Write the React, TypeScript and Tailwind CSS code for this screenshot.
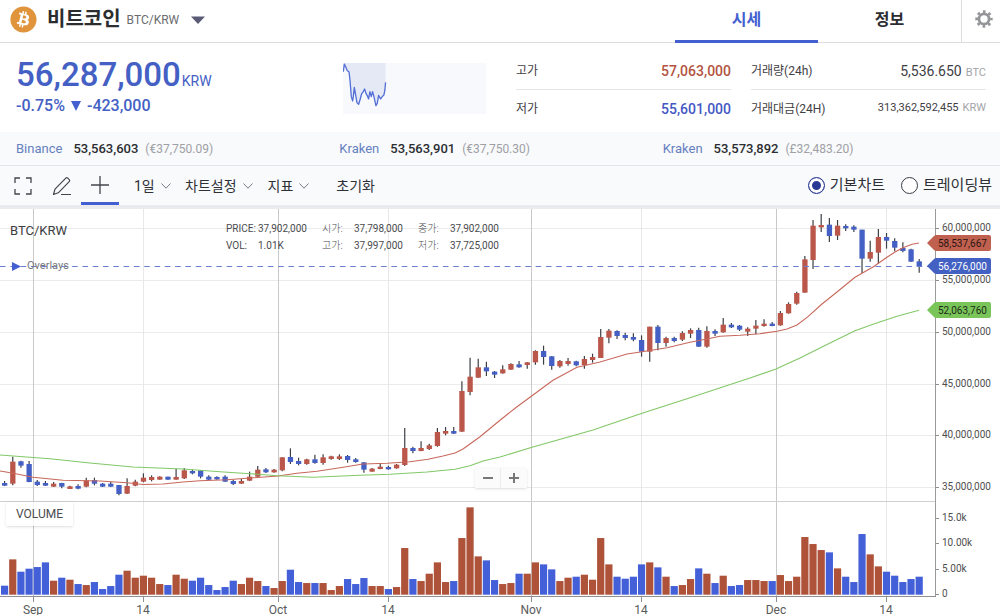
import { useState } from "react";
import { FaBitcoin } from "react-icons/fa";

type Candle = [up: 0 | 1, high: number, top: number, bottom: number, low: number, volume: number];

// Prices run downwards in thirds of a unit from the top of each block.
const blocks: { top: number; candles: Candle[] }[] = [
  {
    top: 440,
    candles: [
      [0, 123, 129, 137, 138, 27],
      [1, 50, 65, 131, 136, 106],
      [0, 62, 64, 77, 83, 69],
      [0, 63, 72, 126, 127, 78],
      [0, 120, 125, 135, 138, 83],
      [0, 123, 129, 137, 138, 97],
      [1, 126, 131, 140, 141, 42],
      [0, 128, 129, 140, 145, 51],
      [1, 137, 139, 147, 147, 45],
      [0, 133, 138, 146, 148, 32],
      [1, 113, 121, 140, 142, 29],
      [0, 113, 120, 131, 136, 38],
      [0, 129, 131, 140, 141, 17],
      [0, 126, 131, 140, 141, 26],
      [0, 135, 135, 162, 166, 60],
      [1, 115, 138, 161, 162, 72],
      [1, 119, 125, 137, 139, 51],
      [1, 100, 113, 125, 127, 57],
      [1, 106, 111, 120, 124, 51],
      [1, 109, 110, 119, 119, 32],
      [0, 110, 110, 119, 120, 29],
      [1, 86, 111, 119, 119, 60],
      [1, 84, 91, 115, 117, 48],
      [0, 89, 93, 100, 103, 42],
      [0, 91, 91, 110, 115, 51],
      [0, 106, 110, 119, 120, 29],
      [0, 109, 111, 118, 119, 14],
      [0, 106, 110, 125, 126, 23],
      [0, 119, 123, 132, 135, 42],
      [1, 117, 123, 131, 132, 32],
      [1, 95, 110, 122, 123, 51],
    ],
  },
  {
    top: 400,
    candles: [
      [1, 198, 209, 230, 231, 41],
      [0, 204, 208, 217, 219, 26],
      [1, 207, 209, 217, 218, 20],
      [1, 171, 172, 211, 214, 41],
      [0, 145, 171, 186, 192, 75],
      [0, 173, 183, 192, 196, 38],
      [1, 176, 178, 192, 194, 35],
      [0, 164, 178, 189, 191, 35],
      [1, 163, 172, 189, 194, 35],
      [1, 167, 169, 177, 179, 14],
      [1, 163, 169, 177, 180, 26],
      [0, 165, 168, 180, 188, 47],
      [0, 174, 178, 186, 188, 32],
      [0, 186, 187, 209, 218, 50],
      [1, 204, 206, 215, 215, 26],
      [1, 191, 200, 207, 208, 26],
      [0, 197, 201, 208, 209, 17],
      [1, 192, 194, 205, 206, 23],
      [1, 84, 144, 195, 198, 140],
      [0, 140, 144, 153, 160, 47],
      [1, 124, 144, 153, 154, 41],
      [1, 131, 136, 147, 150, 63],
      [1, 84, 96, 138, 140, 97],
      [1, 81, 93, 101, 106, 38],
      [0, 81, 93, 101, 102, 41],
    ],
  },
  {
    top: 335,
    candles: [
      [1, 139, 168, 290, 291, 170],
      [1, 68, 125, 171, 181, 262],
      [1, 71, 97, 128, 129, 115],
      [0, 80, 97, 109, 123, 103],
      [0, 108, 110, 119, 129, 44],
    ],
  },
  {
    top: 300,
    candles: [
      [1, 196, 208, 220, 221, 32],
      [1, 190, 192, 209, 210, 35],
      [0, 183, 193, 202, 203, 63],
      [1, 186, 187, 195, 206, 63],
      [1, 151, 153, 187, 194, 97],
      [0, 137, 153, 171, 194, 91],
      [0, 168, 169, 198, 209, 76],
      [1, 180, 183, 199, 203, 41],
      [1, 174, 183, 192, 197, 51],
      [0, 182, 184, 196, 199, 54],
      [1, 168, 177, 195, 206, 60],
      [1, 161, 171, 180, 188, 45],
      [1, 87, 111, 174, 174, 170],
      [1, 87, 92, 113, 130, 91],
      [0, 91, 93, 108, 117, 54],
      [0, 98, 105, 114, 121, 48],
      [0, 100, 111, 119, 124, 54],
      [0, 106, 120, 155, 170, 91],
      [1, 80, 80, 155, 185, 97],
      [0, 75, 80, 129, 151, 82],
      [1, 110, 114, 129, 140, 54],
      [0, 110, 114, 123, 127, 26],
      [1, 94, 99, 119, 123, 29],
      [1, 85, 90, 101, 114, 47],
      [0, 83, 90, 140, 141, 79],
      [1, 79, 93, 140, 143, 63],
      [0, 88, 93, 101, 108, 35],
      [1, 54, 74, 97, 98, 57],
      [0, 69, 74, 82, 84, 26],
      [0, 75, 77, 89, 93, 29],
    ],
  },
  {
    top: 205,
    candles: [
      [1, 367, 371, 380, 393, 44],
      [1, 345, 362, 371, 388, 44],
      [1, 343, 356, 363, 365, 41],
      [0, 351, 356, 363, 364, 41],
      [1, 318, 324, 361, 362, 59],
      [1, 292, 297, 325, 326, 41],
      [1, 260, 264, 296, 299, 54],
      [1, 153, 163, 263, 263, 173],
      [1, 45, 62, 165, 192, 152],
      [1, 27, 60, 67, 81, 134],
      [0, 39, 59, 93, 111, 127],
      [1, 45, 62, 92, 105, 79],
      [0, 58, 63, 70, 78, 54],
      [0, 61, 65, 74, 81, 38],
      [0, 74, 74, 161, 204, 182],
      [1, 107, 141, 161, 170, 121],
      [1, 72, 96, 143, 176, 85],
      [0, 84, 96, 107, 131, 69],
      [0, 100, 108, 128, 139, 57],
      [0, 112, 129, 138, 142, 38],
      [0, 131, 133, 170, 171, 47],
      [0, 162, 169, 184, 203, 54],
    ],
  },
];

const candles = blocks.flatMap(({ top, candles }) =>
  candles.map(([up, high, open, close, low, volume]) => ({
    up: up === 1,
    high: top + high / 3,
    top: top + open / 3,
    bottom: top + close / 3,
    low: top + low / 3,
    volume: volume / 3,
  }))
);

const maShort =
  "0,471 12,473 33,477.3 63,480.3 100,481 127,482.7 143,484.5 163,484 183,482 200,480.7 227,479.7 250,478 278,476 297,473.3 317,471.3 340,467.7 363,464 387,463.3 410,461.7 428,459.3 443,456 455,453 463,449 480,436.7 500,420.3 516,407.5 532,395.7 553,380.3 577,367.3 600,362 627,354 642,351.7 667,347.7 690,342.3 703,339.7 720,336.3 740,335.3 760,333.7 777,331.3 787,329 797,325 808,316.7 822,304 837,292 855,277.3 873,267 887,257.3 895,252 903,247.7 912,244.3 919,243";
const maLong =
  "0,455 50,458.7 90,463 133,467 183,469 220,471.7 250,473.7 278,475.7 313,477.3 360,475.3 390,474.3 427,472 455,469.3 470,465.7 483,461 500,457 532,447.3 593,430 642,413.3 687,398.7 750,378 776,369 800,358 826,345 855,330.7 873,324.3 897,316.3 919,310.3";

const priceTicks = [
  { y: 228, label: "60,000,000" },
  { y: 280, label: "55,000,000" },
  { y: 332, label: "50,000,000" },
  { y: 384, label: "45,000,000" },
  { y: 435, label: "40,000,000" },
  { y: 487, label: "35,000,000" },
];

const volumeTicks = [
  { y: 518, label: "15.0k" },
  { y: 543, label: "10.00k" },
  { y: 569, label: "5.00k" },
  { y: 594, label: "0" },
];

const dateTicks = [
  { x: 33, label: "Sep", month: true },
  { x: 143, label: "14", month: false },
  { x: 278, label: "Oct", month: true },
  { x: 388, label: "14", month: false },
  { x: 531, label: "Nov", month: true },
  { x: 641, label: "14", month: false },
  { x: 776, label: "Dec", month: true },
  { x: 886, label: "14", month: false },
];

const tags = [
  { y: 243, label: "58,537,667", fill: "#c0604f", color: "#2b1512" },
  { y: 266, label: "56,276,000", fill: "#4361c2", color: "#ffffff" },
  { y: 310, label: "52,063,760", fill: "#79c55a", color: "#1d2b17" },
];

const exchanges = [
  { name: "Binance", price: "53,563,603", foreign: "(€37,750.09)" },
  { name: "Kraken", price: "53,563,901", foreign: "(€37,750.30)" },
  { name: "Kraken", price: "53,573,892", foreign: "(£32,483.20)" },
];

const legend = [
  ["PRICE:", "37,902,000", "시가:", "37,798,000", "종가:", "37,902,000"],
  ["VOL:", "1.01K", "고가:", "37,997,000", "저가:", "37,725,000"],
];

const sparkline =
  "1,26 4,3 8,11 13,23 18,26 21,51 25,101 29,114 31,101 34,73 38,96 42,119 47,124 51,111 56,93 61,86 65,78 69,91 73,98 77,108 81,86 85,101 89,86 93,101 99,128 103,121 107,97 113,108 118,101 123,96 126,81 128,58";

function Chevron() {
  return (
    <svg className="h-2 w-3" viewBox="0 0 12 8" fill="none" stroke="#777c85">
      <path d="M1.5 1.5 6 6.2l4.5-4.7" />
    </svg>
  );
}

function Header() {
  return (
    <header className="flex h-[43px] items-stretch border-b border-[#dcdde0] bg-white">
      <div className="flex flex-1 items-center pb-1 pl-[10px]">
        <FaBitcoin className="size-[27px] text-[#e0943c]" />
        <h1 className="ml-[10px] text-[20px] font-bold text-[#2c2d31]">비트코인</h1>
        <button className="ml-[6px] flex items-center gap-3 pt-[2px] text-xs text-[#6b6c70]" aria-haspopup="listbox">
          BTC/KRW
          <svg className="h-2 w-[14px]" viewBox="0 0 14 8" fill="#5c5b76">
            <path d="M0 .5h14L7 8z" />
          </svg>
        </button>
      </div>
      <nav className="-mb-px flex text-base font-bold">
        <a href="#price" className="flex w-[143px] items-center justify-center border-b-[3px] border-[#4460d0] text-[#4460d0]">
          시세
        </a>
        <a href="#info" className="flex w-[143px] items-center justify-center border-b-[3px] border-transparent text-[#2c2d31]">
          정보
        </a>
      </nav>
      <button aria-label="설정" className="flex w-[39px] items-center justify-center border-l border-[#dcdde0] pb-1 pl-[6px]">
        <svg className="size-[18px]" viewBox="0 0 18 18" fill="none" stroke="#949599">
          <circle cx="9" cy="9" r="5.1" strokeWidth="2.8" />
          <circle cx="9" cy="9" r="7.4" strokeWidth="2.6" strokeDasharray="2.7 3.11" strokeDashoffset="1.35" />
        </svg>
      </button>
    </header>
  );
}

function Summary() {
  return (
    <section className="flex bg-white pb-[5px] pl-4 pr-[14px] text-xs text-[#3f4044]">
      <div className="flex-1 pt-[15px] text-[#4460c4]">
        <div className="flex items-baseline gap-px">
          <strong className="text-[33px] font-medium leading-[34px]">56,287,000</strong>
          <span className="text-sm">KRW</span>
        </div>
        <div className="flex items-center text-base leading-7 font-medium">
          -0.75%
          <svg className="mx-[6px] h-[10px] w-[10px]" viewBox="0 0 10 10" fill="#4460d0">
            <path d="M0 0h10L5 10z" />
          </svg>
          -423,000
        </div>
      </div>
      <svg className="mt-5 h-[51px] w-[143px] bg-[#f8f9fc]" viewBox="0 0 430 153" fill="none">
        <polygon points={`1,0 ${sparkline} 128,0`} fill="#e5e9f6" />
        <polyline points={sparkline} stroke="#5470d6" strokeWidth="4" strokeLinejoin="round" />
      </svg>
      <dl className="ml-[30px] w-[215px] pt-[9px]">
        <div className="flex h-[38px] items-center justify-between border-b border-[#e4e5e8]">
          <dt>고가</dt>
          <dd className="text-sm font-medium text-[#b3543f]">57,063,000</dd>
        </div>
        <div className="flex h-[37px] items-center justify-between">
          <dt>저가</dt>
          <dd className="text-sm font-medium text-[#4458c4]">55,601,000</dd>
        </div>
      </dl>
      <dl className="ml-5 w-[235px] pt-[9px]">
        <div className="flex h-[38px] items-center justify-between border-b border-[#e4e5e8]">
          <dt>거래량(24h)</dt>
          <dd className="flex items-baseline gap-1 text-sm">
            5,536.650 <span className="text-[11px] text-[#a3a4a8]">BTC</span>
          </dd>
        </div>
        <div className="flex h-[37px] items-center justify-between">
          <dt>거래대금(24H)</dt>
          <dd className="flex items-baseline gap-1 text-[11px]">
            313,362,592,455 <span className="text-[#a3a4a8]">KRW</span>
          </dd>
        </div>
      </dl>
    </section>
  );
}

function Toolbar() {
  const [view, setView] = useState("basic");
  const views = [
    { id: "basic", label: "기본차트" },
    { id: "trading", label: "트레이딩뷰" },
  ];

  return (
    <div className="flex h-[43px] items-stretch border-b-4 border-[#e9ebef] bg-[#f8fafc] pr-2 text-sm text-[#2f3036]">
      <button aria-label="전체화면" className="flex w-[43px] items-center justify-center pl-[2px]">
        <svg className="size-[18px]" viewBox="0 0 18 18" fill="none" stroke="#44464c" strokeWidth="1.3">
          <path d="M1 6V1h5M12 1h5v5M17 12v5h-5M6 17H1v-5" />
        </svg>
      </button>
      <button aria-label="그리기" className="flex w-[38px] items-center justify-center">
        <svg className="size-5" viewBox="0 0 20 20" fill="none" stroke="#44464c" strokeWidth="1.2" strokeLinejoin="round">
          <path d="M1.500 18.500 3 13.200 13.800 2.200q1-1 2 0l1.400 1.400q1 1 0 2L6.300 16.800zM9 18.500h10" />
        </svg>
      </button>
      <button aria-label="십자선" className="flex w-[38px] items-center justify-center border-b-[3px] border-[#4460d0]">
        <svg className="mt-[2px] size-[18px]" viewBox="0 0 18 18" stroke="#44464c" strokeWidth="1.3">
          <path d="M9 0v18M0 9h18" />
        </svg>
      </button>
      <label className="ml-[15px] flex items-center gap-1">
        <select aria-label="주기" className="w-[22px] appearance-none bg-transparent outline-none">
          <option>1일</option>
        </select>
        <Chevron />
      </label>
      <button className="ml-[13px] flex items-center gap-[5px]" aria-haspopup="menu">
        차트설정 <Chevron />
      </button>
      <button className="ml-[14px] flex items-center gap-[5px]" aria-haspopup="menu">
        지표 <Chevron />
      </button>
      <button className="ml-[26px]">초기화</button>
      <fieldset className="ml-auto flex items-center gap-4 text-[15px]">
        {views.map((item) => (
          <label key={item.id} className="flex items-center gap-[5px]">
            <input
              type="radio"
              name="view"
              checked={view === item.id}
              onChange={() => setView(item.id)}
              className="size-[17px] appearance-none rounded-full border border-[#3a3b46] bg-white checked:border-[#34429a] checked:bg-[#2a3a95] checked:shadow-[inset_0_0_0_3px_white]"
            />
            {item.label}
          </label>
        ))}
      </fieldset>
    </div>
  );
}

function Chart() {
  return (
    <section className="relative bg-white">
      <svg className="block w-full" viewBox="0 209 1000 406" fill="none">
        {/* grid */}
        {priceTicks.map(({ y, label }) => (
          <path key={label} d={`M0 ${y + 0.5}H935`} stroke="#ebebeb" />
        ))}
        {dateTicks.map(({ x, month }) => (
          <path key={x} d={`M${x + 0.5} 209V596`} stroke={month ? "#c9c9c9" : "#e8e8e8"} />
        ))}
        <path d="M0 501.5H935" stroke="#cfcfcf" />

        {/* volume */}
        {candles.map((c, i) => (
          <rect key={i} x={1 + i * 8.166} y={594.7 - c.volume} width="7.2" height={c.volume} fill={c.up ? "#ae5239" : "#4460d8"} />
        ))}

        {/* price */}
        {candles.map((c, i) => (
          <g key={i}>
            <path d={`M${4.6 + i * 8.166} ${c.high}V${c.low}`} stroke="#3b3f45" strokeWidth="1.2" />
            <rect x={2 + i * 8.166} y={c.top} width="5.3" height={c.bottom - c.top} fill={c.up ? "#bb574a" : "#4460c4"} />
          </g>
        ))}
        <polyline points={maShort} stroke="#c8685c" strokeWidth="1.1" />
        <polyline points={maLong} stroke="#82c868" strokeWidth="1.1" />
        <path d="M0 266.5H935" stroke="#6b80cc" strokeDasharray="5.6 4.7" />

        {/* axes */}
        <path d="M935.5 209V596" stroke="#9a9a9a" />
        <path d="M0 596.5H936" stroke="#8f8f8f" />
        {[...priceTicks, ...volumeTicks].map(({ y, label }) => (
          <g key={label}>
            <path d={`M936 ${y + 0.5}h3`} stroke="#8f8f8f" />
            <text x="942" y={y + 3} fontSize="10" fill="#4f4f4f">
              {label}
            </text>
          </g>
        ))}
        {dateTicks.map(({ x, label }) => (
          <g key={x}>
            <path d={`M${x + 0.5} 597v5`} stroke="#8f8f8f" />
            <text x={x} y="614" fontSize="12" fill="#5a5a5a" textAnchor="middle">
              {label}
            </text>
          </g>
        ))}
        {tags.map(({ y, label, fill, color }) => (
          <g key={label}>
            <path d={`M927 ${y}l7-7q1-1 2.500-1H989q2 0 2 2v12q0 2-2 2h-52.500q-1.500 0-2.500-1z`} fill={fill} />
            <text x="938" y={y + 4} fontSize="10" fill={color}>
              {label}
            </text>
          </g>
        ))}
      </svg>

      <div className="absolute left-[10px] top-[14px] text-[13px] leading-4 text-[#3c3d40]">BTC/KRW</div>
      <button className="absolute left-3 top-[49px] flex items-center gap-[6px] text-[11px] leading-4 text-[#77787c]">
        <svg className="h-[9px] w-[9px]" viewBox="0 0 9 9" fill="#4460d0">
          <path d="M0 0 9 4.500 0 9z" />
        </svg>
        Overlays
      </button>

      <table className="absolute left-[226px] top-[11px] text-left text-[10px] leading-[17px] text-[#4a4b4e]">
        <tbody>
          {legend.map((row) => (
            <tr key={row[0]}>
              <th className="w-8 font-normal">{row[0]}</th>
              <td className="w-16">{row[1]}</td>
              <th className="w-8 font-light">{row[2]}</th>
              <td className="w-16">{row[3]}</td>
              <th className="w-8 font-light">{row[4]}</th>
              <td>{row[5]}</td>
            </tr>
          ))}
        </tbody>
      </table>

      <div className="absolute left-[6px] top-[293px] bg-white/80 px-[10px] py-1 text-xs text-[#4a4b4e] shadow">VOLUME</div>

      <div className="absolute left-[47.5%] top-[259px] flex h-5 bg-[#fbfbfb] shadow">
        <button aria-label="축소" className="flex w-[26px] items-center justify-center border-r border-[#ececec]">
          <svg className="size-[10px]" viewBox="0 0 10 10" stroke="#777" strokeWidth="2">
            <path d="M0 5h10" />
          </svg>
        </button>
        <button aria-label="확대" className="flex w-[26px] items-center justify-center">
          <svg className="size-[10px]" viewBox="0 0 10 10" stroke="#777" strokeWidth="2">
            <path d="M0 5h10M5 0v10" />
          </svg>
        </button>
      </div>
    </section>
  );
}

export default function App() {
  return (
    <main className="bg-white font-[Roboto,'Noto_Sans_CJK_KR',sans-serif]">
      <Header />
      <Summary />
      <section className="grid h-[34px] grid-cols-3 items-center border-b border-[#e3e5e9] bg-[#f8fafc] pl-4 pr-[14px] text-[13px]">
        {exchanges.map((item) => (
          <div key={item.price} className="flex items-baseline">
            <a href="#exchange" className="text-[#6680c0]">
              {item.name}
            </a>
            <span className="ml-[11px] font-medium text-[#2c2d31]">{item.price}</span>
            <span className="ml-[7px] text-xs text-[#9fa0a4]">{item.foreign}</span>
          </div>
        ))}
      </section>
      <Toolbar />
      <Chart />
    </main>
  );
}
